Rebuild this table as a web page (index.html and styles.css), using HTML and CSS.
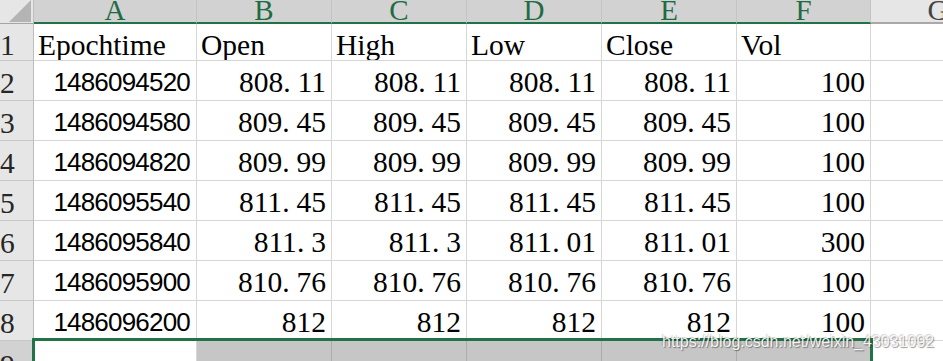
FILE: index.html
```html
<!DOCTYPE html>
<html>
<head>
<meta charset="utf-8">
<link rel="stylesheet" href="styles.css">
</head>
<body>
<div class="sheet">
  <div class="corner"><svg width="34" height="24" viewBox="0 0 34 24"><polygon points="9,22 31,22 31,0" fill="#b4b4b4"/></svg></div>
  <div class="ch sel">A</div>
  <div class="ch sel">B</div>
  <div class="ch sel">C</div>
  <div class="ch sel">D</div>
  <div class="ch sel">E</div>
  <div class="ch sel">F</div>
  <div class="ch">G</div>

  <div class="rh first">1</div>
  <div class="c first txt">Epochtime</div>
  <div class="c first txt">Open</div>
  <div class="c first txt">High</div>
  <div class="c first txt">Low</div>
  <div class="c first txt">Close</div>
  <div class="c first txt">Vol</div>
  <div class="c first"></div>

  <div class="rh">2</div>
  <div class="c ep">1486094520</div>
  <div class="c num">808<span class="dot">.</span>11</div>
  <div class="c num">808<span class="dot">.</span>11</div>
  <div class="c num">808<span class="dot">.</span>11</div>
  <div class="c num">808<span class="dot">.</span>11</div>
  <div class="c num">100</div>
  <div class="c"></div>

  <div class="rh">3</div>
  <div class="c ep">1486094580</div>
  <div class="c num">809<span class="dot">.</span>45</div>
  <div class="c num">809<span class="dot">.</span>45</div>
  <div class="c num">809<span class="dot">.</span>45</div>
  <div class="c num">809<span class="dot">.</span>45</div>
  <div class="c num">100</div>
  <div class="c"></div>

  <div class="rh">4</div>
  <div class="c ep">1486094820</div>
  <div class="c num">809<span class="dot">.</span>99</div>
  <div class="c num">809<span class="dot">.</span>99</div>
  <div class="c num">809<span class="dot">.</span>99</div>
  <div class="c num">809<span class="dot">.</span>99</div>
  <div class="c num">100</div>
  <div class="c"></div>

  <div class="rh">5</div>
  <div class="c ep">1486095540</div>
  <div class="c num">811<span class="dot">.</span>45</div>
  <div class="c num">811<span class="dot">.</span>45</div>
  <div class="c num">811<span class="dot">.</span>45</div>
  <div class="c num">811<span class="dot">.</span>45</div>
  <div class="c num">100</div>
  <div class="c"></div>

  <div class="rh">6</div>
  <div class="c ep">1486095840</div>
  <div class="c num">811<span class="dot">.</span>3</div>
  <div class="c num">811<span class="dot">.</span>3</div>
  <div class="c num">811<span class="dot">.</span>01</div>
  <div class="c num">811<span class="dot">.</span>01</div>
  <div class="c num">300</div>
  <div class="c"></div>

  <div class="rh">7</div>
  <div class="c ep">1486095900</div>
  <div class="c num">810<span class="dot">.</span>76</div>
  <div class="c num">810<span class="dot">.</span>76</div>
  <div class="c num">810<span class="dot">.</span>76</div>
  <div class="c num">810<span class="dot">.</span>76</div>
  <div class="c num">100</div>
  <div class="c"></div>

  <div class="rh">8</div>
  <div class="c ep">1486096200</div>
  <div class="c num">812</div>
  <div class="c num">812</div>
  <div class="c num">812</div>
  <div class="c num">812</div>
  <div class="c num">100</div>
  <div class="c"></div>

  <div class="rh selrow">9</div>
  <div class="c"></div>
  <div class="c shade"></div>
  <div class="c shade"></div>
  <div class="c shade"></div>
  <div class="c shade"></div>
  <div class="c shade"></div>
  <div class="c"></div>

  <div class="selection"></div>
  <div class="watermark">https://blog.csdn.net/weixin_43031092</div>
</div>
</body>
</html>
```

FILE: styles.css
```css
html, body {
  margin: 0;
  padding: 0;
  background: #ffffff;
  overflow: hidden;
  width: 943px;
  height: 361px;
}

.sheet {
  position: relative;
  display: grid;
  grid-template-columns: 34px 163px 135px 135px 135px 135px 134px 135px;
  grid-template-rows: 24px 37px repeat(7, 40px) 40px;
  font-family: "Liberation Serif", "DejaVu Serif", serif;
  color: #000;
}

.corner {
  background: #e6e6e6;
  box-sizing: border-box;
  border-right: 1px solid #bdbdbd;
  border-bottom: 1px solid #a6a6a6;
  overflow: hidden;
  line-height: 0;
}

.corner svg {
  display: block;
}

.ch {
  box-sizing: border-box;
  background: #e6e6e6;
  border-right: 1px solid #c4c4c4;
  border-bottom: 2px solid #a9a9a9;
  text-align: center;
  font-size: 29px;
  line-height: 20px;
  color: #444444;
  overflow: hidden;
  white-space: nowrap;
}

.ch.sel {
  background: #d2d2d2;
  color: #1f6c44;
  border-bottom: 2px solid #217346;
}

.rh {
  box-sizing: border-box;
  background: #e6e6e6;
  border-right: 1px solid #bdbdbd;
  border-bottom: 1px solid #c6c6c6;
  display: flex;
  align-items: flex-end;
  padding: 0 0 2px 0;
  font-size: 29.5px;
  line-height: 30px;
  color: #262626;
  overflow: hidden;
}

.rh.first {
  padding-bottom: 0;
}

.rh.selrow {
  background: #d2d2d2;
  align-items: flex-start;
  padding-top: 9px;
}

.c {
  box-sizing: border-box;
  border-right: 1px solid #d6d6d6;
  border-bottom: 1px solid #d6d6d6;
  display: flex;
  align-items: flex-end;
  padding: 0 5px 3px 4px;
  font-size: 29.5px;
  line-height: 30px;
  white-space: nowrap;
  overflow: hidden;
}

.c.first {
  padding-bottom: 0;
}

.txt {
  justify-content: flex-start;
}

.num {
  justify-content: flex-end;
}

.ep {
  justify-content: flex-end;
  font-family: "Liberation Sans", Arial, sans-serif;
  font-size: 26px;
  letter-spacing: -0.8px;
  padding-right: 6px;
}

.dot {
  padding-right: 7px;
}

.shade {
  background: #c6c6c6;
  border-right-color: #adadad;
}

.selection {
  position: absolute;
  left: 32px;
  top: 338px;
  width: 841px;
  height: 40px;
  box-sizing: border-box;
  border: 3px solid #217346;
  border-bottom: none;
  z-index: 2;
}

.watermark {
  position: absolute;
  left: 662px;
  top: 333px;
  font-family: "Liberation Sans", Arial, sans-serif;
  font-size: 16px;
  line-height: 18px;
  color: rgba(248, 248, 248, 0.95);
  text-shadow: 1px 1px 1px rgba(0, 0, 0, 0.4), -1px -1px 1px rgba(0, 0, 0, 0.18);
  white-space: nowrap;
  z-index: 3;
}
```
